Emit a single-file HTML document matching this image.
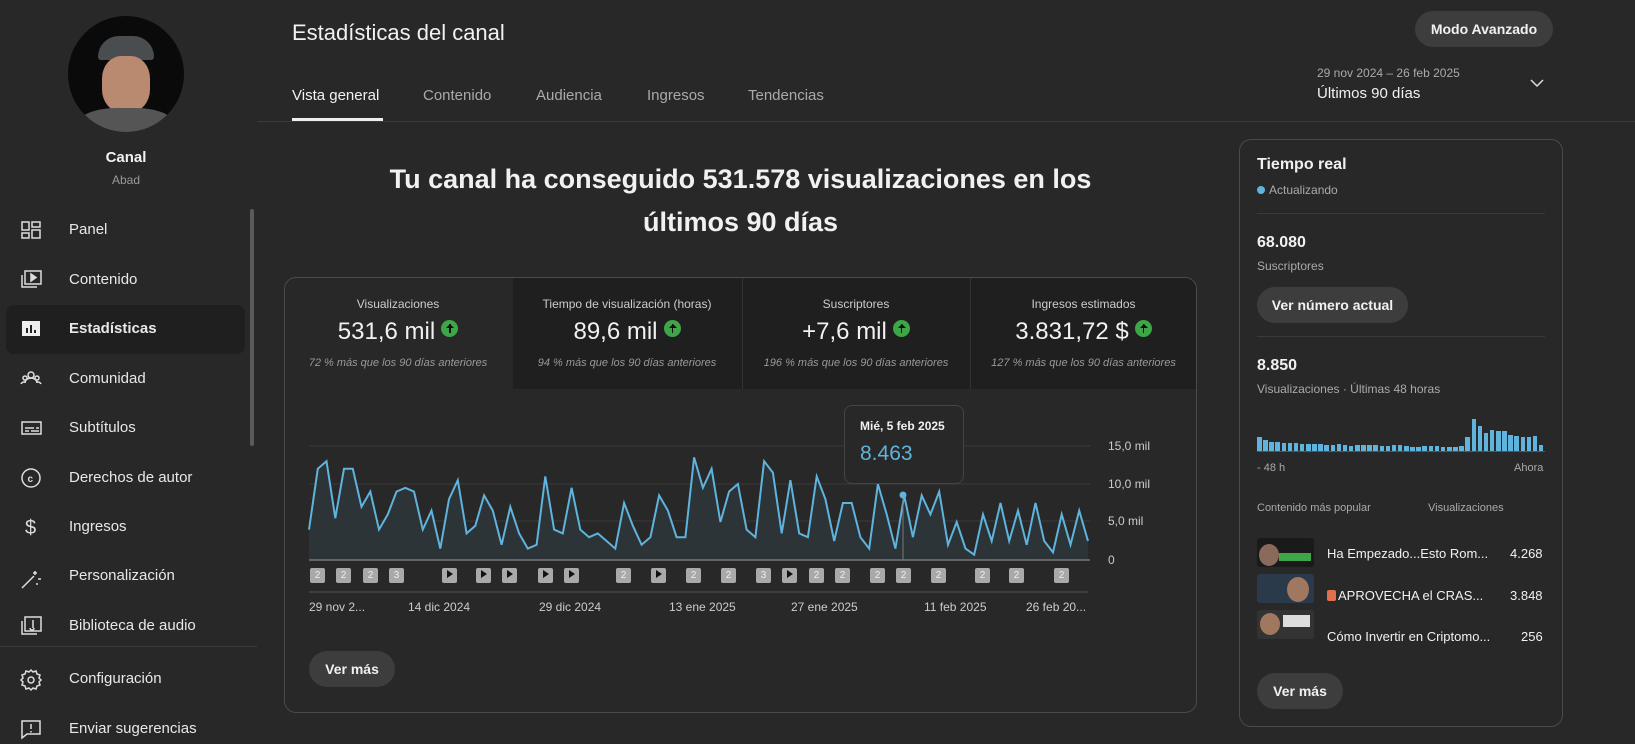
<!DOCTYPE html>
<html><head><meta charset="utf-8"><style>
*{box-sizing:border-box;margin:0;padding:0}
body{width:1635px;height:744px;overflow:hidden;background:#282828;font-family:"Liberation Sans",sans-serif;color:#f1f1f1;position:relative}
.a{position:absolute}
.nav{left:69px;font-size:15px;color:#e8e8e8}
.ic{left:22px;width:20px;height:20px}
.tab{top:87px;font-size:15px;color:#aaa}
.tile{top:278px;height:111px;text-align:center}
.tl{font-size:12px;color:#ccc;margin-top:19px}
.tv{font-size:24px;margin-top:7px;color:#f1f1f1}
.up{display:inline-block;width:17px;height:17px;border-radius:50%;background:#3ea648;vertical-align:2px;margin-left:6px;position:relative}
.up:after{content:"";position:absolute;left:8px;top:4px;width:1.5px;height:9px;background:#111}
.up:before{content:"";position:absolute;left:5px;top:4px;border-left:4px solid transparent;border-right:4px solid transparent;border-bottom:4px solid #111;width:0}
.ts{font-size:11px;font-style:italic;color:#999;margin-top:11px}
.mk{position:absolute;top:568px;width:15px;height:15px;background:#a9a9a9;border-radius:2px;font-size:10px;color:#eee;text-align:center;line-height:15px}
.dl{position:absolute;top:600px;font-size:12px;color:#ccc}
.yl{position:absolute;left:1108px;font-size:12px;color:#ccc}
.btn{position:absolute;background:#3d3d3d;border-radius:18px;font-size:14px;font-weight:bold;text-align:center;color:#f1f1f1}
.rc{left:1257px;font-size:13px}
</style></head><body>
<!-- sidebar -->
<div class="a" style="left:68px;top:16px;width:116px;height:116px;border-radius:50%;background:#0a0a0a;overflow:hidden">
 <div class="a" style="left:30px;top:20px;width:56px;height:24px;border-radius:26px 26px 4px 4px;background:#4a4d50"></div>
 <div class="a" style="left:34px;top:40px;width:48px;height:56px;border-radius:40%;background:#b98a70"></div>
 <div class="a" style="left:10px;top:92px;width:96px;height:40px;border-radius:40%;background:#555"></div>
</div>
<div class="a" style="left:0;width:252px;top:149px;text-align:center;font-size:15px;font-weight:bold">Canal</div>
<div class="a" style="left:0;width:252px;top:173px;text-align:center;font-size:12px;color:#999">Abad</div>
<div class="a" style="left:6px;top:305px;width:239px;height:49px;background:#1f1f1f;border-radius:8px"></div>
<div class="a" style="left:250px;top:209px;width:4px;height:237px;background:#5a5a5a;border-radius:2px"></div>
<div class="a" style="left:0;top:646px;width:257px;height:1px;background:#3a3a3a"></div>
<div class="a nav" style="top:221px">Panel</div>
<div class="a nav" style="top:271px">Contenido</div>
<div class="a nav" style="top:320px;font-weight:bold">Estadísticas</div>
<div class="a nav" style="top:370px">Comunidad</div>
<div class="a nav" style="top:419px">Subtítulos</div>
<div class="a nav" style="top:469px">Derechos de autor</div>
<div class="a nav" style="top:518px">Ingresos</div>
<div class="a nav" style="top:567px">Personalización</div>
<div class="a nav" style="top:617px">Biblioteca de audio</div>
<div class="a nav" style="top:670px">Configuración</div>
<div class="a nav" style="top:720px">Enviar sugerencias</div>
<svg class="a" style="left:0;top:0" width="60" height="744" fill="none" stroke="#ddd" stroke-width="1.5">
 <rect x="22" y="222" width="7" height="8"/><rect x="32" y="222" width="8" height="5"/><rect x="22" y="233" width="7" height="5"/><rect x="32" y="230" width="8" height="8"/>
 <rect x="25" y="271" width="16" height="13"/><path d="M22 275v12h15"/><path d="M31 274l5 3.5-5 3.5z" fill="#ddd"/>
 <rect x="22" y="321" width="18" height="15" fill="#eee" stroke="none"/><path d="M27 333v-5M31 333v-8M35 333v-3" stroke="#222" stroke-width="2"/>
 <circle cx="31" cy="375" r="3"/><circle cx="25" cy="378" r="2"/><circle cx="37" cy="378" r="2"/><path d="M25 383a6 5 0 0112 0M21 384a4 3 0 015-2M41 384a4 3 0 00-5-2"/>
 <rect x="22" y="422" width="19" height="12"/><path d="M25 428h9M36 428h3M25 431h4M31 431h8"/>
 <circle cx="31" cy="478" r="9"/><text x="27.5" y="482" font-size="10" fill="#ddd" stroke="none" font-family="Liberation Sans" font-weight="bold">c</text>
 <text x="25" y="534" font-size="20" fill="#ddd" stroke="none" font-family="Liberation Sans">$</text>
 <path d="M22 588l12-12M35 571v4M33 573h4M38 579h3M37 583v2"/>
 <rect x="25" y="617" width="16" height="14"/><path d="M22 621v13h15"/><path d="M33 620v8M30 628a2 2 0 104 0" />
 <circle cx="31" cy="680" r="3"/><path d="M31 670l2 2 3-1 1 3 3 1-1 3 2 2-2 2 1 3-3 1-1 3-3-1-2 2-2-2-3 1-1-3-3-1 1-3-2-2 2-2-1-3 3-1 1-3 3 1z"/>
 <path d="M22 721h18v13H27l-5 4z"/><path d="M31 724v5M31 731v1.5"/>
</svg>
<!-- header -->
<div class="a" style="left:292px;top:20px;font-size:22px">Estadísticas del canal</div>
<div class="a" style="left:257px;top:121px;width:1378px;height:1px;background:#3a3a3a"></div>
<div class="a tab" style="left:292px;color:#f1f1f1">Vista general</div>
<div class="a" style="left:292px;top:118px;width:91px;height:3px;background:#eee"></div>
<div class="a tab" style="left:423px">Contenido</div>
<div class="a tab" style="left:536px">Audiencia</div>
<div class="a tab" style="left:647px">Ingresos</div>
<div class="a tab" style="left:748px">Tendencias</div>
<div class="btn" style="left:1415px;top:11px;width:138px;height:36px;line-height:36px;font-size:14px">Modo Avanzado</div>
<div class="a" style="left:1317px;top:66px;font-size:12px;color:#aaa">29 nov 2024 – 26 feb 2025</div>
<div class="a" style="left:1317px;top:85px;font-size:15px">Últimos 90 días</div>
<svg class="a" style="left:1530px;top:78px" width="14" height="10"><path d="M1 2l6 6 6-6" stroke="#ddd" stroke-width="1.5" fill="none"/></svg>
<div class="a" style="left:284px;width:913px;top:158px;text-align:center;font-size:27px;font-weight:bold;line-height:43px">Tu canal ha conseguido 531.578 visualizaciones en los<br>últimos 90 días</div>
<!-- main card -->
<div class="a" style="left:284px;top:277px;width:913px;height:436px;border:1px solid #4a4a4a;border-radius:12px;overflow:hidden">
 <div class="a" style="left:228px;top:0;width:685px;height:111px;background:#1f1f1f"></div>
 <div class="a" style="left:457px;top:0;width:1px;height:111px;background:#333"></div>
 <div class="a" style="left:685px;top:0;width:1px;height:111px;background:#333"></div>
</div>
<div class="a tile" style="left:284px;width:228px"><div class="tl">Visualizaciones</div><div class="tv">531,6 mil<span class="up"></span></div><div class="ts">72 % más que los 90 días anteriores</div></div>
<div class="a tile" style="left:512px;width:230px"><div class="tl">Tiempo de visualización (horas)</div><div class="tv">89,6 mil<span class="up"></span></div><div class="ts">94 % más que los 90 días anteriores</div></div>
<div class="a tile" style="left:742px;width:228px"><div class="tl">Suscriptores</div><div class="tv">+7,6 mil<span class="up"></span></div><div class="ts">196 % más que los 90 días anteriores</div></div>
<div class="a tile" style="left:970px;width:227px"><div class="tl">Ingresos estimados</div><div class="tv">3.831,72 $<span class="up"></span></div><div class="ts">127 % más que los 90 días anteriores</div></div>
<svg id="ch" class="a" style="left:0;top:0" width="1635" height="744"></svg>
<div class="yl" style="top:439px">15,0 mil</div>
<div class="yl" style="top:477px">10,0 mil</div>
<div class="yl" style="top:514px">5,0 mil</div>
<div class="yl" style="top:553px">0</div>
<div id="mks"></div>
<div class="dl" style="left:309px">29 nov 2...</div>
<div class="dl" style="left:408px">14 dic 2024</div>
<div class="dl" style="left:539px">29 dic 2024</div>
<div class="dl" style="left:669px">13 ene 2025</div>
<div class="dl" style="left:791px">27 ene 2025</div>
<div class="dl" style="left:924px">11 feb 2025</div>
<div class="dl" style="left:1026px">26 feb 20...</div>
<div class="a" style="left:844px;top:405px;width:120px;height:79px;background:#282828;border:1px solid #444;border-radius:8px">
 <div style="margin:13px 0 0 15px;font-size:12px;font-weight:bold">Mié, 5 feb 2025</div>
 <div style="margin:9px 0 0 15px;font-size:21px;color:#5fb3dc">8.463</div>
</div>
<div class="btn" style="left:309px;top:651px;width:86px;height:36px;line-height:36px">Ver más</div>
<!-- right card -->
<div class="a" style="left:1239px;top:139px;width:324px;height:588px;border:1px solid #4a4a4a;border-radius:12px"></div>
<div class="a" style="left:1257px;top:156px;font-size:16px;font-weight:bold">Tiempo real</div>
<div class="a" style="left:1257px;top:183px;font-size:12px;color:#aaa"><span style="display:inline-block;width:8px;height:8px;border-radius:50%;background:#5fb3dc;margin-right:4px"></span>Actualizando</div>
<div class="a" style="left:1257px;top:213px;width:288px;height:1px;background:#3a3a3a"></div>
<div class="a" style="left:1257px;top:234px;font-size:16px;font-weight:bold">68.080</div>
<div class="a" style="left:1257px;top:259px;font-size:12px;color:#aaa">Suscriptores</div>
<div class="btn" style="left:1257px;top:287px;width:151px;height:36px;line-height:36px">Ver número actual</div>
<div class="a" style="left:1257px;top:336px;width:288px;height:1px;background:#3a3a3a"></div>
<div class="a" style="left:1257px;top:357px;font-size:16px;font-weight:bold">8.850</div>
<div class="a" style="left:1257px;top:382px;font-size:12px;color:#aaa">Visualizaciones · Últimas 48 horas</div>
<div id="bars"></div>
<div class="a" style="left:1257px;top:451px;width:288px;height:1px;background:#555"></div>
<div class="a" style="left:1257px;top:462px;font-size:11px;color:#aaa">- 48 h</div>
<div class="a" style="left:1514px;top:462px;font-size:11px;color:#aaa">Ahora</div>
<div class="a" style="left:1257px;top:502px;font-size:11px;color:#aaa">Contenido más popular</div>
<div class="a" style="left:1428px;top:502px;font-size:11px;color:#aaa">Visualizaciones</div>
<div class="a" style="left:1257px;top:538px;width:57px;height:29px;background:#1a1a1a;border-radius:3px"><div class="a" style="left:22px;top:15px;width:32px;height:8px;background:#3ea648"></div><div class="a" style="left:2px;top:6px;width:20px;height:22px;border-radius:50%;background:#8a6a5a"></div></div>
<div class="a" style="left:1257px;top:574px;width:57px;height:29px;background:#2a3a4a;border-radius:3px"><div class="a" style="left:30px;top:3px;width:22px;height:25px;border-radius:50%;background:#a07860"></div></div>
<div class="a" style="left:1257px;top:610px;width:57px;height:29px;background:#333;border-radius:3px"><div class="a" style="left:3px;top:3px;width:20px;height:22px;border-radius:50%;background:#a07860"></div><div class="a" style="left:26px;top:5px;width:27px;height:12px;background:#ddd"></div></div>
<div class="a rc" style="top:546px">Ha Empezado...Esto Rom...</div>
<div class="a rc" style="top:587px;left:1327px;display:none"></div>
<div class="a rc" style="top:546px;left:1510px">4.268</div>
<div class="a rc" style="top:588px"><span style="display:inline-block;width:9px;height:11px;background:#e07050;border-radius:2px;vertical-align:-1px;margin-right:2px"></span>APROVECHA el CRAS...</div>
<div class="a rc" style="top:588px;left:1510px">3.848</div>
<div class="a rc" style="top:629px">Cómo Invertir en Criptomo...</div>
<div class="a rc" style="top:629px;left:1521px">256</div>
<div class="btn" style="left:1257px;top:673px;width:86px;height:36px;line-height:36px">Ver más</div>
<script>
var rc=document.querySelectorAll('.rc');for(var i=0;i<rc.length;i++)rc[i].style.left=rc[i].style.left||'1327px';
var v=[4,12,13,5.5,12,12,7,9,4,6,9,9.5,9,4,6.5,1.5,8,10.5,3.5,4.5,8.5,6.5,2,7,3.5,1.5,2,11,4,3.5,9.5,4,3,3.5,2.5,1.5,7.5,4.5,2,3,8.5,6.5,3,3,13.5,9.5,12,5,9,10,4,3,13,11.5,3.5,10.5,3.5,3,11,8,2.5,7.5,7.5,3,1.5,10,6,1.5,8.5,3,8.5,6,9,2,5,1.5,0.7,6,2.5,7.5,2.5,6.5,2,7.5,2.5,1,6,2,6.5,2.5];
var x0=309,x1=1088,b=560,k=7.6,st=(x1-x0)/(v.length-1),p='';
for(i=0;i<v.length;i++)p+=(i?'L':'M')+(x0+i*st).toFixed(1)+' '+(b-v[i]*k).toFixed(1);
var s='';
[446,484,521].forEach(function(y){s+='<line x1="309" x2="1090" y1="'+y+'" y2="'+y+'" stroke="#3a3a3a"/>'});
s+='<path d="'+p+'L'+x1+' '+b+'L'+x0+' '+b+'Z" fill="#2c3438"/>';
s+='<path d="'+p+'" fill="none" stroke="#5fb3dc" stroke-width="2"/>';
s+='<line x1="309" x2="1090" y1="560" y2="560" stroke="#777" stroke-width="1.5"/>';
s+='<line x1="309" x2="1088" y1="592" y2="592" stroke="#555"/>';
s+='<line x1="903" x2="903" y1="495" y2="560" stroke="#777"/><circle cx="903" cy="495" r="3.5" fill="#5fb3dc"/>';
document.getElementById('ch').innerHTML=s;
var m=[[317,2],[343,2],[370,2],[396,3],[449,0],[483,0],[509,0],[545,0],[571,0],[623,2],[658,0],[693,2],[728,2],[763,3],[789,0],[816,2],[842,2],[877,2],[903,2],[938,2],[982,2],[1016,2],[1061,2]],h='';
m.forEach(function(a){h+='<div class="mk" style="left:'+(a[0]-7)+'px">'+(a[1]?a[1]:'<span style="display:inline-block;border-left:6px solid #111;border-top:4px solid transparent;border-bottom:4px solid transparent;vertical-align:0"></span>')+'</div>'});
document.getElementById('mks').innerHTML=h;
var bv=[14,11,9,9,8,8,8,7,7,7,7,6,6,7,6,5,6,6,6,6,5,5,6,6,5,4,4,5,5,5,4,4,4,5,14,32,25,18,21,20,20,16,15,14,14,15,6];
h='';var bw=288/bv.length;
bv.forEach(function(t,i){h+='<div class="a" style="left:'+(1257+i*bw).toFixed(1)+'px;top:'+(451-t)+'px;width:'+(bw-1.5).toFixed(1)+'px;height:'+t+'px;background:#5fb3dc"></div>'});
document.getElementById('bars').innerHTML=h;
</script>
</body></html>
